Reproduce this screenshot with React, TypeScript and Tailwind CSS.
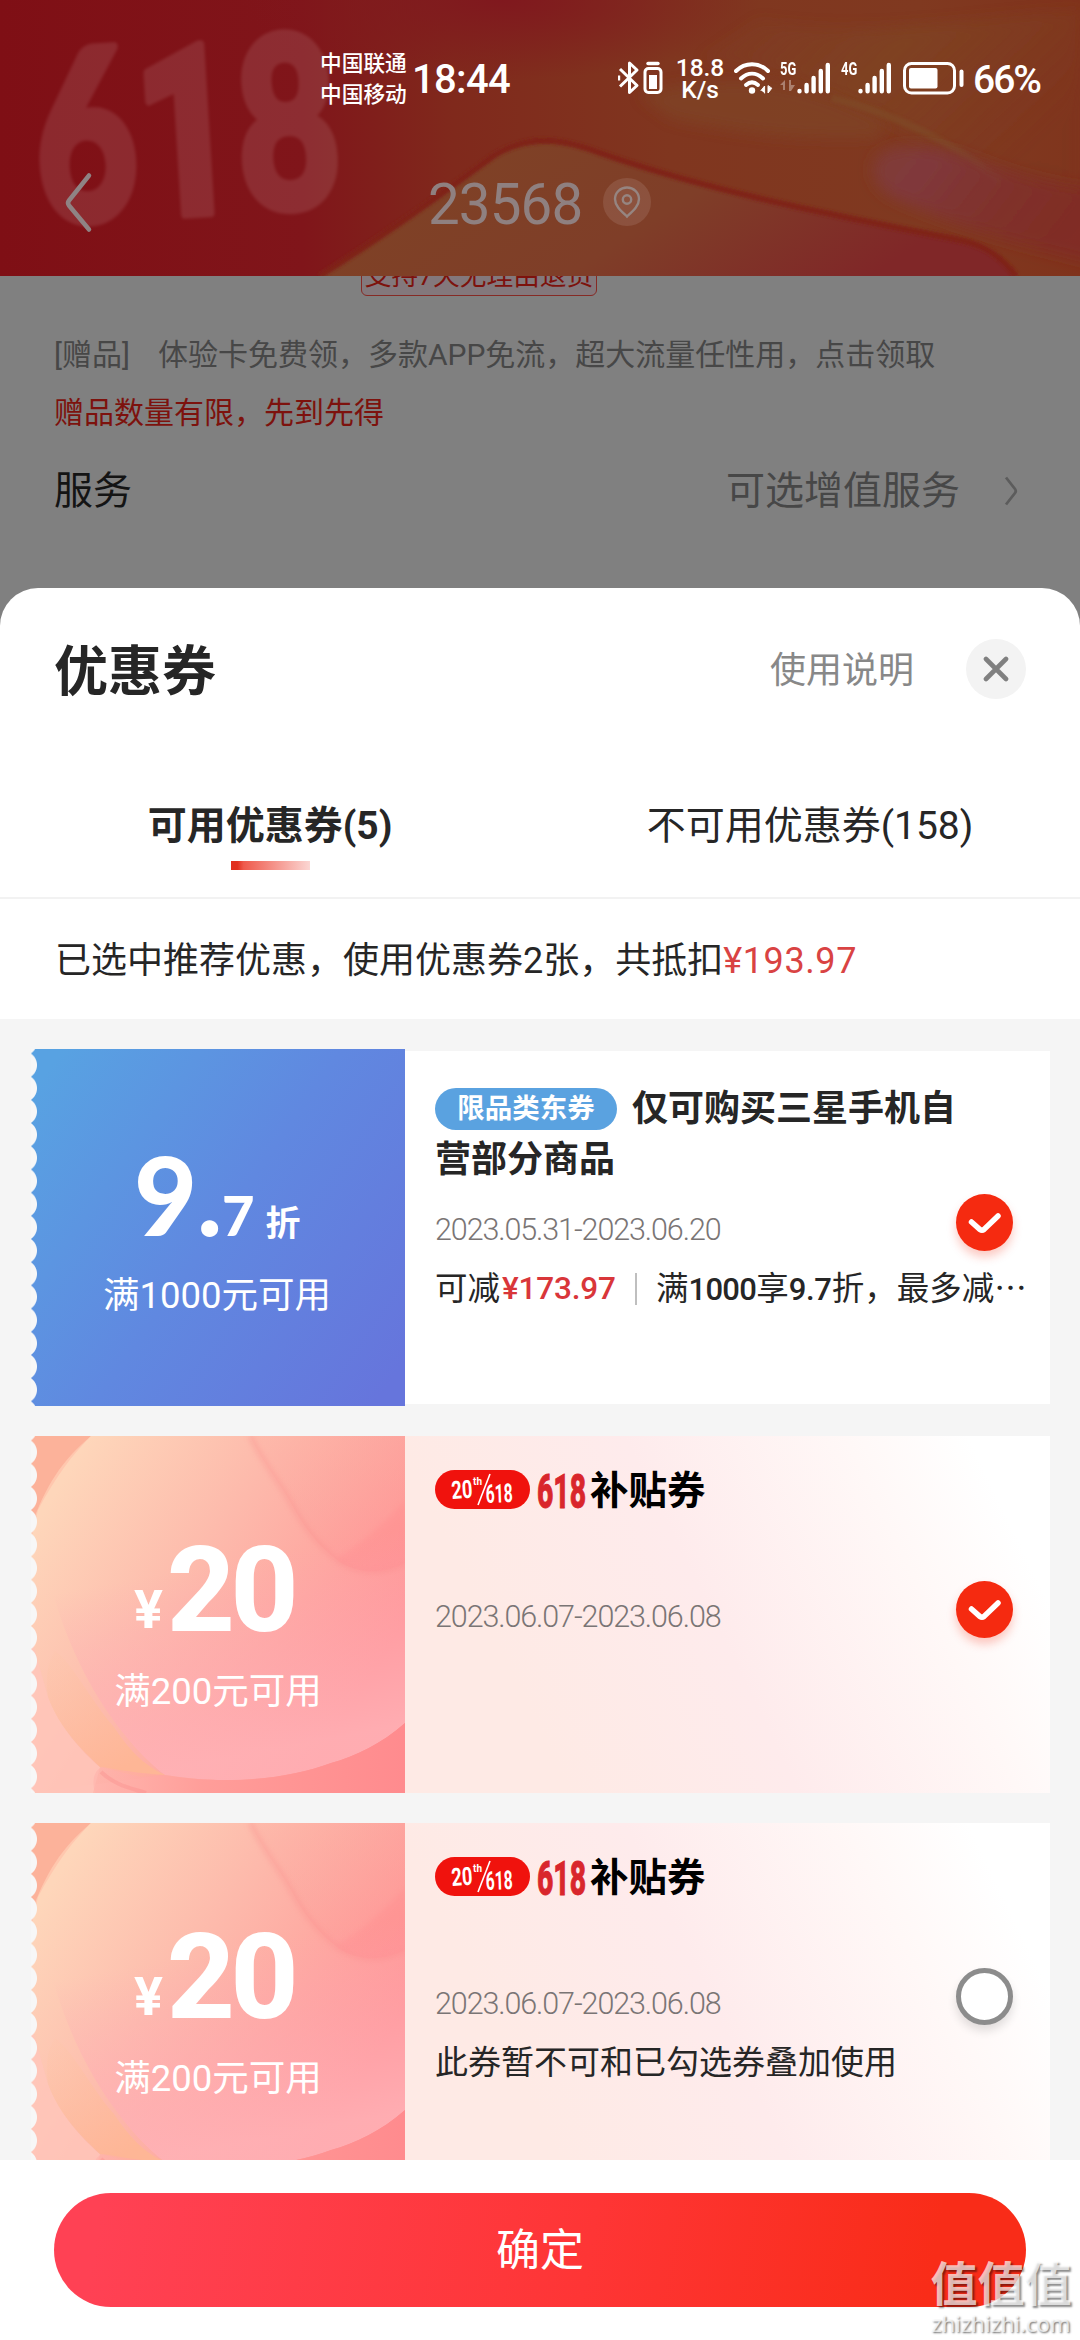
import clsx from "clsx";

type Coupon = {
  id: number;
  kind: "discount" | "cash";
  condition: string;
  date: string;
  checked: boolean;
  note?: string;
};

const coupons: Coupon[] = [
  {
    id: 1,
    kind: "discount",
    condition: "满1000元可用",
    date: "2023.05.31-2023.06.20",
    checked: true,
  },
  {
    id: 2,
    kind: "cash",
    condition: "满200元可用",
    date: "2023.06.07-2023.06.08",
    checked: true,
  },
  {
    id: 3,
    kind: "cash",
    condition: "满200元可用",
    date: "2023.06.07-2023.06.08",
    checked: false,
    note: "此券暂不可和已勾选券叠加使用",
  },
];

function HeaderArt() {
  return (
    <svg className="absolute inset-0" width="1080" height="276" viewBox="0 0 1080 276">
      <defs>
        <linearGradient id="base" x1="0" y1="0" x2="1" y2="0">
          <stop offset="0" stopColor="#7f0f15" />
          <stop offset="0.28" stopColor="#80151a" />
          <stop offset="0.42" stopColor="#80291c" />
          <stop offset="0.62" stopColor="#80361f" />
          <stop offset="0.85" stopColor="#803920" />
          <stop offset="1" stopColor="#80331c" />
        </linearGradient>
        <linearGradient id="hill" x1="0" y1="0" x2="1" y2="0.3">
          <stop offset="0" stopColor="#80201b" />
          <stop offset="0.25" stopColor="#7f4126" />
          <stop offset="0.6" stopColor="#7f3e28" />
          <stop offset="1" stopColor="#802728" />
        </linearGradient>
        <linearGradient id="purple" x1="0" y1="0" x2="1" y2="0.4">
          <stop offset="0" stopColor="#803c34" />
          <stop offset="0.25" stopColor="#80393c" />
          <stop offset="0.65" stopColor="#80302e" stopOpacity="0.8" />
          <stop offset="1" stopColor="#802a26" stopOpacity="0.7" />
        </linearGradient>
        <linearGradient id="gold" x1="0" y1="0" x2="1" y2="0.5">
          <stop offset="0" stopColor="#80422b" stopOpacity="0.1" />
          <stop offset="0.5" stopColor="#7f4522" />
          <stop offset="1" stopColor="#7f3f24" stopOpacity="0.2" />
        </linearGradient>
        <radialGradient id="redTop">
          <stop offset="0" stopColor="#80181e" />
          <stop offset="1" stopColor="#80181e" stopOpacity="0" />
        </radialGradient>
        <filter id="soft" x="-10%" y="-20%" width="120%" height="140%">
          <feGaussianBlur stdDeviation="7" />
        </filter>
        <filter id="line" x="-5%" y="-5%" width="110%" height="110%">
          <feGaussianBlur stdDeviation="1.5" />
        </filter>
      </defs>
      <rect width="1080" height="276" fill="url(#base)" />
      <ellipse cx="500" cy="0" rx="260" ry="80" fill="url(#redTop)" />
      <path
        d="M760 20 C860 40 960 20 1080 10 L1080 190 C1010 180 960 160 900 130 C840 95 780 70 700 60Z"
        fill="url(#gold)"
        filter="url(#soft)"
        opacity="0.7"
      />
      <path
        d="M640 95 C720 70 800 80 860 110 C900 125 890 140 850 138 C790 140 720 130 670 118Z"
        fill="#7f4526"
        filter="url(#soft)"
        opacity="0.7"
      />
      <path
        d="M832 98 C890 112 960 145 1000 182"
        fill="none"
        stroke="#7f4c28"
        strokeWidth="7"
        opacity="0.6"
        filter="url(#line)"
      />
      <path
        d="M875 160 C885 142 930 142 980 162 C1030 180 1060 185 1100 190 L1100 265 C1020 245 960 228 900 200 C875 190 870 175 875 160Z"
        fill="url(#purple)"
        filter="url(#soft)"
      />
      <path
        d="M320 276 C400 225 440 195 495 155 C530 135 560 138 600 153 C720 195 860 220 960 240 C990 246 1005 262 1016 276Z"
        fill="url(#hill)"
      />
      <path
        d="M320 276 C400 225 440 195 495 155 C530 135 560 138 600 153 C720 195 860 220 960 240 C990 246 1005 262 1016 276"
        fill="none"
        stroke="#7f2113"
        strokeWidth="6"
        filter="url(#line)"
      />
      <text
        fontSize="236"
        fontWeight="900"
        fontFamily="Lato"
        fill="#fff"
        stroke="#fff"
        strokeWidth="9"
        strokeLinejoin="round"
        opacity="0.1"
        filter="url(#line)"
        textLength="304"
        lengthAdjust="spacingAndGlyphs"
        transform="translate(40 223) rotate(-3.5)"
      >
        6<tspan fontFamily="Roboto" fontWeight="800">1</tspan>8
      </text>
    </svg>
  );
}

function Signal() {
  return (
    <svg width="34" height="32" viewBox="0 0 34 32" stroke="#fff" strokeWidth="4.4" strokeLinecap="round">
      <path d="M2.5 29v.2M9.6 23v6.2M16.6 16v13.2M23.8 9v20.2M30.8 3v26.2" />
    </svg>
  );
}

function StatusBar() {
  return (
    <div className="relative flex h-[105px] items-start pl-[320px] text-white">
      <div className="mt-[48px] w-[87px] text-[21.7px] leading-[31px] font-medium whitespace-nowrap">
        <div>中国联通</div>
        <div>中国移动</div>
      </div>
      <div className="mt-[60px] ml-[5px] w-[206px] text-[40px] leading-[40px] font-medium tracking-[-0.7px]">
        18:44
      </div>
      <svg className="mt-[60px]" width="46" height="36" viewBox="0 0 46 36" fill="none" stroke="#fff">
        <path d="M2 9 19 25.5 11.5 32.5V3L19 10 2 26.5" strokeWidth="3" strokeLinejoin="round" />
        <path d="M1 15.5v5" strokeWidth="2.4" />
        <rect x="27" y="8.5" width="16" height="24" rx="3.5" strokeWidth="3" />
        <path d="M30 3.5h10" strokeWidth="3.4" strokeLinecap="round" />
        <rect x="31" y="15" width="8" height="14" fill="#fff" stroke="none" />
      </svg>
      <div className="mt-[57px] ml-[10px] w-[52px] text-center text-[24.5px] leading-[22px] font-medium">
        <div>18.8</div>
        <div>K/s</div>
      </div>
      <svg className="mt-[61px] ml-[8px]" width="42" height="36" viewBox="0 0 42 36" fill="none" stroke="#fff" strokeLinecap="round">
        <path d="M2 10C11 1 25 1 34 10" strokeWidth="4" />
        <path d="M7 17.5C14 11 22 11 29 17.5" strokeWidth="4" />
        <path d="M12 24C16 20.5 20 20.5 24 24" strokeWidth="4" />
        <circle cx="18" cy="29.5" r="3.2" fill="#fff" stroke="none" />
        <path d="M27 29.5 30.6 25v7M34 25v7l3.6-4.500z" strokeWidth="1" fill="#fff" />
      </svg>
      <div className="mt-[60px] ml-[4px] w-[17px] text-[18px] leading-[18px] font-bold">
        <div className="origin-left scale-x-[0.72]">5G</div>
        <svg width="16" height="14" viewBox="0 0 16 14" fill="#fff" opacity="0.35">
          <path d="M5 2v10H3V7H0zM9 2h2v5h4l-4 6H9z" />
        </svg>
      </div>
      <div className="mt-[62px]">
        <Signal />
      </div>
      <div className="mt-[60px] ml-[10px] w-[17px] text-[18px] leading-[18px] font-bold">
        <div className="origin-left scale-x-[0.72]">4G</div>
      </div>
      <div className="mt-[62px]">
        <Signal />
      </div>
      <svg className="mt-[61px] ml-[10px]" width="64" height="35" viewBox="0 0 64 35" fill="none" stroke="#fff">
        <rect x="2.5" y="2.5" width="50" height="29.5" rx="7" strokeWidth="3" />
        <rect x="7" y="7" width="28.5" height="20.5" rx="2" fill="#fff" stroke="none" />
        <path d="M59.5 10.5v13.5" strokeWidth="4" strokeLinecap="round" />
      </svg>
      <div className="mt-[60px] ml-[7px] text-[39px] leading-[40px] font-medium tracking-[-2px]">
        66%
      </div>
    </div>
  );
}

function Header() {
  return (
    <div className="relative z-10 h-[276px] w-full shrink-0 overflow-hidden">
      <HeaderArt />
      <StatusBar />
      <div className="relative flex h-[194px] items-start">
        <svg className="mt-[67px] ml-[64px]" width="30" height="62" viewBox="0 0 30 62" fill="none">
          <path d="M25 3.5 5 28.5q-2 2.5 0 5L25 57.5" stroke="#8f8384" strokeWidth="4.5" strokeLinecap="round" />
        </svg>
        <div className="mt-[70px] ml-[334px] w-[175px] text-[56.5px] leading-[60px] tracking-[-0.9px] text-[#8f8080]">
          23568
        </div>
        <div className="mt-[73px] flex h-12 w-12 items-center justify-center rounded-full bg-white/10">
          <svg width="30" height="34" viewBox="0 0 30 34" fill="none" stroke="#968581" strokeWidth="2.4">
            <path d="M15 31.5C9 26 3 21 3 14a12 11.5 0 0 1 24 0C27 21 21 26 15 31.5Z" />
            <circle cx="15" cy="14.5" r="4.2" />
          </svg>
        </div>
      </div>
    </div>
  );
}

function PageBehind() {
  return (
    <div className="h-[312px] shrink-0 bg-[#808080]">
      <div className="-mt-[20px] ml-[361px] flex h-[40px] w-[236px] items-center justify-center rounded-[6px] border border-[#862a25] bg-[#83787c] text-[26.7px] leading-[38px] whitespace-nowrap text-[#7d120d]">
        支持7天无理由退货
      </div>
      <div className="mt-[39px] pl-[54px] text-[30px] leading-[40px] whitespace-nowrap text-[#474747]">
        [赠品]<span className="ml-[28px]">体验卡免费领，多款APP免流，超大流量任性用，点击领取</span>
      </div>
      <div className="mt-[18px] pl-[54px] text-[30px] leading-[40px] text-[#7d120d]">
        赠品数量有限，先到先得
      </div>
      <div className="mt-[33px] flex items-center pr-[60px] pl-[54px] text-[39px] leading-[50px]">
        <span className="text-[#141414]">服务</span>
        <span className="ml-auto text-[#474747]">可选增值服务</span>
        <svg className="ml-[42px]" width="18" height="32" viewBox="0 0 18 32" fill="none">
          <path d="M4 2.5 13 14q1.500 2 0 4L4 29.5" stroke="#5c5c5c" strokeWidth="2.8" />
        </svg>
      </div>
    </div>
  );
}

function CashArt() {
  return (
    <svg className="absolute inset-0" width="374" height="357" viewBox="0 0 374 357">
      <defs>
        <linearGradient id="cashBase" x1="0" y1="0.3" x2="1" y2="0.7">
          <stop offset="0" stopColor="#ffc7ae" />
          <stop offset="0.4" stopColor="#ffb8ae" />
          <stop offset="1" stopColor="#ff8c8e" />
        </linearGradient>
        <linearGradient id="cashDisc" x1="0.1" y1="0.1" x2="0.95" y2="0.6">
          <stop offset="0" stopColor="#fed6ba" />
          <stop offset="0.45" stopColor="#fdb9ab" />
          <stop offset="1" stopColor="#ff9696" />
        </linearGradient>
        <linearGradient id="cashFold" x1="0" y1="0" x2="0.9" y2="0.9">
          <stop offset="0" stopColor="#feb5a6" />
          <stop offset="0.5" stopColor="#fca39c" />
          <stop offset="1" stopColor="#ff9092" />
        </linearGradient>
        <linearGradient id="cashPink" x1="0" y1="0" x2="0.2" y2="1">
          <stop offset="0.45" stopColor="#ffa3b4" stopOpacity="0" />
          <stop offset="1" stopColor="#ffb2b8" stopOpacity="0.8" />
        </linearGradient>
        <linearGradient id="cashBand" x1="0" y1="0" x2="0.5" y2="1">
          <stop offset="0" stopColor="#fec6a4" stopOpacity="0.1" />
          <stop offset="1" stopColor="#feb696" />
        </linearGradient>
        <linearGradient id="cashBottom" x1="0" y1="0" x2="1" y2="0">
          <stop offset="0" stopColor="#ffb3ac" stopOpacity="0.6" />
          <stop offset="0.35" stopColor="#ff9c98" stopOpacity="0.85" />
          <stop offset="1" stopColor="#ff8b8e" />
        </linearGradient>
        <filter id="foldBlur">
          <feGaussianBlur stdDeviation="2.5" />
        </filter>
      </defs>
      <rect width="374" height="357" fill="url(#cashBase)" />
      <path d="M0 0H60C30 25 15 50 0 90Z" fill="#fcb29a" />
      <path d="M0 105 7 74C25 40 42 18 60 0H374V287C350 308 325 320 300 327C270 338 235 344 193 344C165 344 150 341 134 339L0 357Z" fill="url(#cashDisc)" />
      <path d="M219 0C235 32 250 48 262 71C276 96 290 112 306 124C325 138 350 139 374 127V0Z" fill="url(#cashFold)" opacity="0.4" />
      <path d="M219 0C235 32 250 48 262 71C276 96 290 112 306 124C325 138 350 139 374 127" fill="none" stroke="#f98c8a" strokeWidth="6" opacity="0.3" filter="url(#foldBlur)" />
      <path d="M310 120C335 104 350 90 374 65V128C352 140 330 138 306 124Z" fill="#ff8e8f" opacity="0.4" filter="url(#foldBlur)" />
      <path d="M7 74C25 40 42 18 60 0H374V287C350 308 325 320 300 327C270 338 235 344 193 344C165 344 150 341 134 339C95 310 20 220 7 74Z" fill="url(#cashPink)" />
      <path d="M0 200 17 261C28 290 50 315 69 331L62 357H0Z" fill="#ffc6ba" opacity="0.8" />
      <path d="M24 215C40 225 60 265 83 291C100 317 115 330 134 339L110 341 69 331C45 308 28 290 17 261C14 240 17 225 24 215Z" fill="url(#cashBand)" />
      <path d="M64 357C60 343 64 333 72 331C105 337 120 338 134 339C200 350 260 342 300 327C325 320 350 308 374 287V357Z" fill="url(#cashBottom)" />
      <path d="M70 336C85 350 100 352 115 357" stroke="#fa8584" strokeWidth="4" opacity="0.3" fill="none" />
    </svg>
  );
}

function TicketLeft({ coupon }: { coupon: Coupon }) {
  const isCash = coupon.kind === "cash";
  return (
    <div
      className={clsx(
        "relative h-[357px] w-[374px] shrink-0 overflow-hidden",
        !isCash && "bg-[linear-gradient(125deg,#58a2e2_5%,#6088e0_50%,#6675dc_95%)]"
      )}
    >
      {isCash && <CashArt />}
      {/* torn edge */}
      <div className="absolute inset-y-0 left-0 w-[6px] bg-[radial-gradient(circle_at_-8px_50%,#f7f7f7_13.5px,transparent_14.5px)] bg-[length:6px_23.2px] bg-[position:0_4.5px]" />
      {isCash ? (
        <div className="relative flex h-[194px] items-end justify-center pr-[8px] font-bold text-white">
          <span className="mr-[4px] text-[54px] leading-[40px]">¥</span>
          <span className="h-[94px] text-[118px] leading-[110px] font-extrabold tracking-[-4.5px]">
            20
          </span>
        </div>
      ) : (
        <div className="relative flex h-[187px] items-baseline pl-[103px] font-['Lato','Noto_Sans_CJK_SC',sans-serif] font-black text-white">
          <span className="mt-[90px] text-[109px] leading-[110px]">9</span>
          <span className="text-[104px] leading-[60px]">.</span>
          <span className="text-[56px] leading-[60px]">7</span>
          <span className="ml-[11px] text-[35px] leading-[40px] font-bold">折</span>
        </div>
      )}
      <div
        className={clsx(
          "relative text-center text-[36.5px] leading-[50px] text-white",
          isCash ? "mt-[37px]" : "-ml-[2px] mt-[35px]"
        )}
      >
        {coupon.condition}
      </div>
    </div>
  );
}

function CheckMark({ checked }: { checked: boolean }) {
  if (!checked) {
    return (
      <div className="h-[57px] w-[57px] rounded-full border-[5px] border-[#8c8c8c] bg-white shadow-[0_6px_10px_rgba(0,0,0,0.12)]" />
    );
  }
  return (
    <div className="flex h-[57px] w-[57px] items-center justify-center rounded-full bg-[#f52a10] shadow-[0_6px_10px_rgba(245,42,16,0.25)]">
      <svg width="36" height="26" viewBox="0 0 36 26" fill="none">
        <path d="M4.5 12 13 19.5Q15 21 17 19.5L31 6" stroke="#fff" strokeWidth="5.5" strokeLinecap="round" />
      </svg>
    </div>
  );
}

function SaleTitle() {
  return (
    <div className="flex h-[39px] items-center">
      <svg width="95" height="39" viewBox="0 0 95 39" fontFamily="Roboto" fontWeight="700" fill="#fff">
        <rect width="95" height="39" rx="19.5" fill="#f0120d" />
        <text x="17" y="29" fontSize="25" textLength="21" lengthAdjust="spacingAndGlyphs" transform="rotate(-4 17 28)">20</text>
        <text x="38" y="15" fontSize="10">th</text>
        <path d="M55 4 43 35" stroke="#fff" strokeWidth="1.6" />
        <text x="51" y="33" fontSize="26" textLength="27" lengthAdjust="spacingAndGlyphs" transform="rotate(-2 51 32)">618</text>
      </svg>
      <svg className="ml-[7px]" width="50" height="39" viewBox="0 0 50 39" fontFamily="Roboto" fontWeight="800" fill="#d9262c" stroke="#d9262c">
        <text x="0" y="37.5" fontSize="49" textLength="49" lengthAdjust="spacingAndGlyphs">618</text>
      </svg>
      <span className="mt-[2px] ml-[3px] text-[38.5px] leading-[39px] font-bold text-black">
        补贴券
      </span>
    </div>
  );
}

function CouponCard({ coupon }: { coupon: Coupon }) {
  const isCash = coupon.kind === "cash";
  return (
    <div className="flex h-[357px] w-[1019px] shrink-0">
      <TicketLeft coupon={coupon} />
      <div
        className={clsx(
          "relative flex-1 pl-[30px]",
          isCash
            ? "bg-[linear-gradient(64deg,#feeae5_20%,#feebec_48%,#fff8f7_75%,#ffffff_90%)]"
            : "my-[2px] bg-white"
        )}
      >
        {isCash ? (
          <div className="pt-[34px]">
            <SaleTitle />
          </div>
        ) : (
          <div className="w-[540px] pt-[33px] text-[36px] leading-[51px] font-bold text-[#262626]">
            <span className="mr-[15px] inline-flex h-[42px] w-[182px] items-center justify-center rounded-full bg-[#5aa2e0] align-[3px] text-[27.5px] leading-[42px] text-white">
              限品类东券
            </span>
            仅可购买三星手机自营部分商品
          </div>
        )}
        <div
          className={clsx(
            "text-[30.5px] leading-[40px] font-light tracking-[-1.1px] text-[#7a7575]",
            isCash ? "mt-[88px]" : "mt-[24px]"
          )}
        >
          {coupon.date}
        </div>
        {coupon.kind === "discount" && (
          <div className="mt-[17px] flex h-[44px] items-center text-[32.5px] leading-[44px] whitespace-nowrap text-[#262626]">
            <span>可减</span>
            <b className="ml-[2px] w-[115px] text-[31.5px] font-medium tracking-[-0.2px] text-[#d9363a]">
              ¥173.97
            </b>
            <i className="mr-[19px] ml-[18px] h-[32px] w-[2px] bg-[#bfbfbf]" />
            <span>
              满<b className="text-[31px] font-medium tracking-[-0.7px]">1000</b>享
              <b className="text-[31px] font-medium tracking-[-0.3px]">9.7</b>折，最多减⋯
            </span>
          </div>
        )}
        {coupon.note && (
          <div className="mt-[19px] text-[33px] leading-[40px] whitespace-nowrap text-[#262626]">
            {coupon.note}
          </div>
        )}
        <div
          className={clsx("absolute right-[37px]", isCash ? "top-[145px]" : "top-[143px]")}
        >
          <CheckMark checked={coupon.checked} />
        </div>
      </div>
    </div>
  );
}

function Sheet() {
  return (
    <div className="flex flex-1 flex-col overflow-hidden rounded-t-[38px] bg-white">
      <div className="flex h-[162px] shrink-0 items-center pr-[54px] pl-[54px]">
        <h1 className="pt-[7px] text-[54px] leading-[60px] font-bold text-[#262626]">优惠券</h1>
        <span className="ml-auto pt-[3px] text-[36px] text-[#888888]">使用说明</span>
        <div className="ml-[52px] flex h-[60px] w-[60px] items-center justify-center rounded-full bg-[#f3f3f3]">
          <svg width="26" height="26" viewBox="0 0 26 26" stroke="#808080" strokeWidth="4.6" strokeLinecap="round">
            <path d="M3 3 23 23M23 3 3 23" />
          </svg>
        </div>
      </div>
      <div className="flex h-[149px] shrink-0 border-b-2 border-[#f2f2f2] text-[39px] leading-[60px] text-[#262626]">
        <div className="flex w-1/2 flex-col items-center pt-[46px] font-bold">
          可用优惠券(5)
          <div className="mt-[5px] h-[9px] w-[79px] bg-[linear-gradient(90deg,#e1301f_8%,#ef5a4c_16%,#fbd6d3)]" />
        </div>
        <div className="flex w-1/2 flex-col items-center pt-[46px]">不可用优惠券(158)</div>
      </div>
      <div className="flex h-[120px] shrink-0 items-center pt-[4px] pl-[55px] text-[36px] text-[#262626]">
        已选中推荐优惠，使用优惠券2张，共抵扣
        <span className="tracking-[0.6px] text-[#d94343]">¥193.97</span>
      </div>
      <div className="flex h-[1141px] shrink-0 flex-col gap-[30px] overflow-hidden bg-[#f5f5f5] pt-[30px] pl-[31px]">
        {coupons.map((coupon) => (
          <CouponCard key={coupon.id} coupon={coupon} />
        ))}
      </div>
      <div className="flex-1 px-[54px] pt-[33px]">
        <button className="h-[114px] w-full rounded-full bg-[linear-gradient(100deg,#ff4154_5%,#fe3535_55%,#f92c18_90%)] pt-[2px] text-[44px] text-white">
          确定
        </button>
      </div>
    </div>
  );
}

function Watermark() {
  return (
    <div className="absolute right-[8px] bottom-[4px] w-[142px] text-center text-white/70">
      <div className="text-[47px] leading-[50px] font-bold [text-shadow:2px_2px_2px_rgba(0,0,0,0.45)]">
        值值值
      </div>
      <div className="font-['Noto_Sans',sans-serif] text-[22px] leading-[26px] [text-shadow:1px_1px_2px_rgba(0,0,0,0.6)]">
        zhizhizhi.com
      </div>
    </div>
  );
}

export default function App() {
  return (
    <div className="relative flex h-[2340px] w-[1080px] flex-col overflow-hidden bg-[#808080] font-['Roboto','Noto_Sans_CJK_SC',sans-serif]">
      <Header />
      <PageBehind />
      <Sheet />
      <Watermark />
    </div>
  );
}
